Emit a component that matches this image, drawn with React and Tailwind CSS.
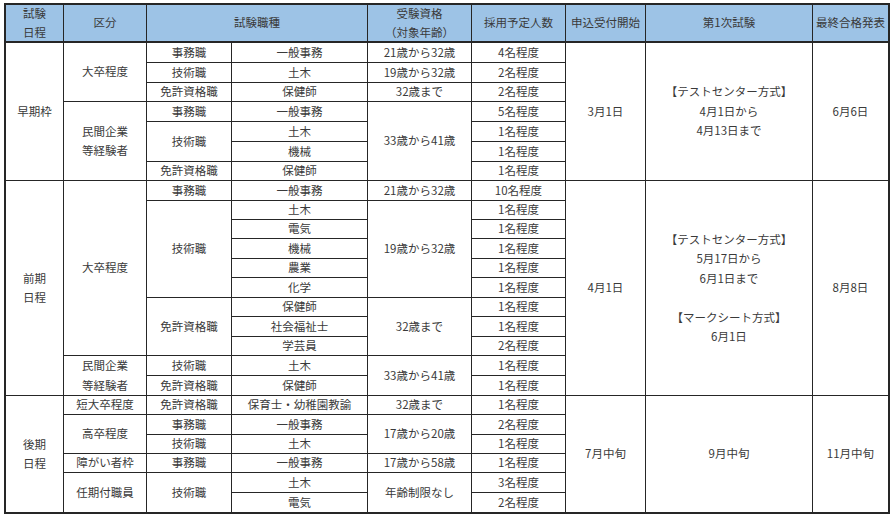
import React from "react";

function Cell({ c, children, head }) {
  return (
    <div
      className={
        "flex flex-col items-center justify-center text-center leading-[19.5px] whitespace-nowrap " +
        (head ? "bg-[#9dc3e6] border-b border-[#262626] " : "bg-white ") +
        c
      }
    >
      {children}
    </div>
  );
}

const col4 = [
  ["row-start-2", "一般事務"],
  ["row-start-3", "土木"],
  ["row-start-4", "保健師"],
  ["row-start-5", "一般事務"],
  ["row-start-6", "土木"],
  ["row-start-7", "機械"],
  ["row-start-8", "保健師"],
  ["row-start-9", "一般事務"],
  ["row-start-10", "土木"],
  ["row-start-11", "電気"],
  ["row-start-12", "機械"],
  ["row-start-13", "農業"],
  ["row-start-14", "化学"],
  ["row-start-15", "保健師"],
  ["row-start-16", "社会福祉士"],
  ["row-start-17", "学芸員"],
  ["row-start-18", "土木"],
  ["row-start-19", "保健師"],
  ["row-start-20", "保育士・幼稚園教諭"],
  ["row-start-21", "一般事務"],
  ["row-start-22", "土木"],
  ["row-start-23", "一般事務"],
  ["row-start-24", "土木"],
  ["row-start-25", "電気"],
];

const col6 = [
  ["row-start-2", "4名程度"],
  ["row-start-3", "2名程度"],
  ["row-start-4", "2名程度"],
  ["row-start-5", "5名程度"],
  ["row-start-6", "1名程度"],
  ["row-start-7", "1名程度"],
  ["row-start-8", "1名程度"],
  ["row-start-9", "10名程度"],
  ["row-start-10", "1名程度"],
  ["row-start-11", "1名程度"],
  ["row-start-12", "1名程度"],
  ["row-start-13", "1名程度"],
  ["row-start-14", "1名程度"],
  ["row-start-15", "1名程度"],
  ["row-start-16", "1名程度"],
  ["row-start-17", "2名程度"],
  ["row-start-18", "1名程度"],
  ["row-start-19", "1名程度"],
  ["row-start-20", "1名程度"],
  ["row-start-21", "2名程度"],
  ["row-start-22", "1名程度"],
  ["row-start-23", "1名程度"],
  ["row-start-24", "3名程度"],
  ["row-start-25", "2名程度"],
];

export default function App() {
  return (
    <div className="w-[896px] h-[518px] bg-white overflow-hidden">
      <div
        className="ml-[4px] mt-[3px] w-[886px] border-2 border-[#262626] bg-[#262626] text-[#3a3a3a] text-[11.5px] font-['Noto_Sans_CJK_JP','Noto_Sans',sans-serif]"
      >
        <div className="grid gap-px grid-cols-[57px_82px_84px_135px_103px_93px_79px_166px_75px] grid-rows-[37px_19px_19px_18px_19px_19px_19px_18px_19px_18px_18px_19px_18px_19px_18px_19px_18px_19px_19px_18px_19px_18px_18px_19px_19px]">
          {/* header */}
          <Cell head c="col-start-1 row-start-1">
            <span>試験</span>
            <span>日程</span>
          </Cell>
          <Cell head c="col-start-2 row-start-1">区分</Cell>
          <Cell head c="col-start-3 col-span-2 row-start-1">試験職種</Cell>
          <Cell head c="col-start-5 row-start-1">
            <span>受験資格</span>
            <span>（対象年齢）</span>
          </Cell>
          <Cell head c="col-start-6 row-start-1">採用予定人数</Cell>
          <Cell head c="col-start-7 row-start-1">申込受付開始</Cell>
          <Cell head c="col-start-8 row-start-1">第1次試験</Cell>
          <Cell head c="col-start-9 row-start-1">最終合格発表</Cell>

          {/* col1 */}
          <Cell c="col-start-1 row-start-2 row-span-7">早期枠</Cell>
          <Cell c="col-start-1 row-start-9 row-span-11">
            <span>前期</span>
            <span>日程</span>
          </Cell>
          <Cell c="col-start-1 row-start-20 row-span-6">
            <span>後期</span>
            <span>日程</span>
          </Cell>

          {/* col2 */}
          <Cell c="col-start-2 row-start-2 row-span-3">大卒程度</Cell>
          <Cell c="col-start-2 row-start-5 row-span-4">
            <span>民間企業</span>
            <span>等経験者</span>
          </Cell>
          <Cell c="col-start-2 row-start-9 row-span-9">大卒程度</Cell>
          <Cell c="col-start-2 row-start-18 row-span-2">
            <span>民間企業</span>
            <span>等経験者</span>
          </Cell>
          <Cell c="col-start-2 row-start-20">短大卒程度</Cell>
          <Cell c="col-start-2 row-start-21 row-span-2">高卒程度</Cell>
          <Cell c="col-start-2 row-start-23">障がい者枠</Cell>
          <Cell c="col-start-2 row-start-24 row-span-2">任期付職員</Cell>

          {/* col3 */}
          <Cell c="col-start-3 row-start-2">事務職</Cell>
          <Cell c="col-start-3 row-start-3">技術職</Cell>
          <Cell c="col-start-3 row-start-4">免許資格職</Cell>
          <Cell c="col-start-3 row-start-5">事務職</Cell>
          <Cell c="col-start-3 row-start-6 row-span-2">技術職</Cell>
          <Cell c="col-start-3 row-start-8">免許資格職</Cell>
          <Cell c="col-start-3 row-start-9">事務職</Cell>
          <Cell c="col-start-3 row-start-10 row-span-5">技術職</Cell>
          <Cell c="col-start-3 row-start-15 row-span-3">免許資格職</Cell>
          <Cell c="col-start-3 row-start-18">技術職</Cell>
          <Cell c="col-start-3 row-start-19">免許資格職</Cell>
          <Cell c="col-start-3 row-start-20">免許資格職</Cell>
          <Cell c="col-start-3 row-start-21">事務職</Cell>
          <Cell c="col-start-3 row-start-22">技術職</Cell>
          <Cell c="col-start-3 row-start-23">事務職</Cell>
          <Cell c="col-start-3 row-start-24 row-span-2">技術職</Cell>

          {/* col4 */}
          {col4.map(([r, t]) => (
            <Cell key={"c4" + r} c={"col-start-4 " + r}>
              {t}
            </Cell>
          ))}

          {/* col5 */}
          <Cell c="col-start-5 row-start-2">21歳から32歳</Cell>
          <Cell c="col-start-5 row-start-3">19歳から32歳</Cell>
          <Cell c="col-start-5 row-start-4">32歳まで</Cell>
          <Cell c="col-start-5 row-start-5 row-span-4">33歳から41歳</Cell>
          <Cell c="col-start-5 row-start-9">21歳から32歳</Cell>
          <Cell c="col-start-5 row-start-10 row-span-5">19歳から32歳</Cell>
          <Cell c="col-start-5 row-start-15 row-span-3">32歳まで</Cell>
          <Cell c="col-start-5 row-start-18 row-span-2">33歳から41歳</Cell>
          <Cell c="col-start-5 row-start-20">32歳まで</Cell>
          <Cell c="col-start-5 row-start-21 row-span-2">17歳から20歳</Cell>
          <Cell c="col-start-5 row-start-23">17歳から58歳</Cell>
          <Cell c="col-start-5 row-start-24 row-span-2">年齢制限なし</Cell>

          {/* col6 */}
          {col6.map(([r, t]) => (
            <Cell key={"c6" + r} c={"col-start-6 " + r}>
              {t}
            </Cell>
          ))}

          {/* col7 */}
          <Cell c="col-start-7 row-start-2 row-span-7">3月1日</Cell>
          <Cell c="col-start-7 row-start-9 row-span-11">4月1日</Cell>
          <Cell c="col-start-7 row-start-20 row-span-6">7月中旬</Cell>

          {/* col8 */}
          <Cell c="col-start-8 row-start-2 row-span-7">
            <span>【テストセンター方式】</span>
            <span>4月1日から</span>
            <span>4月13日まで</span>
          </Cell>
          <Cell c="col-start-8 row-start-9 row-span-11">
            <span>【テストセンター方式】</span>
            <span>5月17日から</span>
            <span>6月1日まで</span>
            <span className="h-[19.5px]"></span>
            <span>【マークシート方式】</span>
            <span>6月1日</span>
          </Cell>
          <Cell c="col-start-8 row-start-20 row-span-6">9月中旬</Cell>

          {/* col9 */}
          <Cell c="col-start-9 row-start-2 row-span-7">6月6日</Cell>
          <Cell c="col-start-9 row-start-9 row-span-11">8月8日</Cell>
          <Cell c="col-start-9 row-start-20 row-span-6">11月中旬</Cell>
        </div>
      </div>
    </div>
  );
}
